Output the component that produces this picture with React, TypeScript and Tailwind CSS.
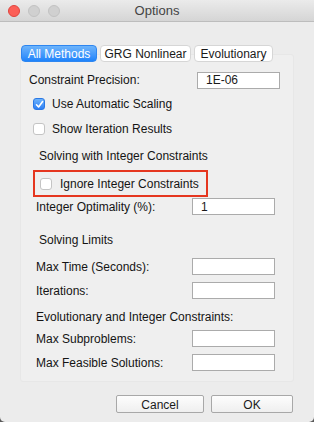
import React from "react";

const font = { fontFamily: '"Liberation Sans", Arial, sans-serif' };

const Field = ({ value = "", className = "" }: { value?: string; className?: string }) => (
  <div
    className={`h-[17px] bg-white border border-[#ababab] flex items-center pl-[8px] text-[12px] text-[#1a1a1a] ${className}`}
  >
    {value}
  </div>
);

const Check = ({ checked = false }: { checked?: boolean }) =>
  checked ? (
    <div className="w-[12px] h-[12px] rounded-[3px] bg-gradient-to-b from-[#6cb2fb] to-[#2d7ff5] border border-[#2a78e4] flex items-center justify-center">
      <svg width="9" height="9" viewBox="0 0 9 9">
        <path d="M1.5 4.8 L3.6 7 L7.6 1.6" fill="none" stroke="white" strokeWidth="1.6" strokeLinecap="round" strokeLinejoin="round" />
      </svg>
    </div>
  ) : (
    <div className="w-[12px] h-[12px] rounded-[3px] bg-white border border-[#c4c4c4]" />
  );

const LabelRow = ({ label, value, mt }: { label: string; value?: string; mt: string }) => (
  <div className={`${mt} h-[17px] flex items-center pl-[15px]`}>
    <span className="w-[156px]">{label}</span>
    <Field value={value} className="w-[83px]" />
  </div>
);

const Tab = ({ label, active = false, w }: { label: string; active?: boolean; w: string }) => (
  <div
    className={`${w} h-[17px] rounded-[4px] flex items-center justify-center text-[12px] ${
      active
        ? "bg-gradient-to-b from-[#6db4fb] to-[#1c83fb] text-white border border-[#2e86f0]"
        : "bg-white text-[#1a1a1a] border border-[#d6d6d6]"
    }`}
  >
    {label}
  </div>
);

export default function App() {
  return (
    <div className="w-[314px] h-[422px] bg-[#5a5a5a]" style={font}>
      <div className="w-[314px] h-[422px] bg-[#ececec] rounded-b-[5px] flex flex-col text-[12px] text-[#141414] overflow-hidden">
        {/* title bar */}
        <div className="h-[22px] shrink-0 bg-gradient-to-b from-[#ebebeb] to-[#d5d5d5] border-b border-[#bdbdbd] relative flex items-center justify-center">
          <div className="absolute left-[8px] top-[5px] flex gap-[8px]">
            <div className="w-[12px] h-[12px] rounded-full bg-[#fc5f57] border border-[#e0443e]" />
            <div className="w-[12px] h-[12px] rounded-full bg-[#d0d0d0] border border-[#c2c2c2]" />
            <div className="w-[12px] h-[12px] rounded-full bg-[#d0d0d0] border border-[#c2c2c2]" />
          </div>
          <span className="text-[13px] text-[#444444]">Options</span>
        </div>

        {/* tabs */}
        <div className="mt-[23px] ml-[21px] flex gap-[3px] relative z-10 -mb-[8px]">
          <Tab label="All Methods" active w="w-[76px]" />
          <Tab label="GRG Nonlinear" w="w-[91px]" />
          <Tab label="Evolutionary" w="w-[79px]" />
        </div>

        {/* panel */}
        <div className="mx-[20px] bg-[#efefef] border border-[#e7e7e7] rounded-[3px] flex flex-col pb-[10px]">
          <div className="mt-[15px] h-[20px] flex items-center pl-[8px]">
            <span className="w-[168px]">Constraint Precision:</span>
            <Field value="1E-06" className="w-[83px] h-[16px]" />
          </div>
          <div className="mt-[5px] h-[18px] flex items-center gap-[7px] pl-[12px]">
            <Check checked />
            <span>Use Automatic Scaling</span>
          </div>
          <div className="mt-[7px] h-[18px] flex items-center gap-[7px] pl-[12px]">
            <Check />
            <span>Show Iteration Results</span>
          </div>
          <div className="mt-[9px] h-[18px] flex items-center pl-[18px]">Solving with Integer Constraints</div>
          <div className="mt-[5px] ml-[12px] w-[175px] h-[27px] border-[2px] border-[#e5361f] flex items-center gap-[8px] pl-[5px]">
            <Check />
            <span>Ignore Integer Constraints</span>
          </div>
          <LabelRow label="Integer Optimality (%):" value="1" mt="mt-[1px]" />
          <div className="mt-[16px] h-[18px] flex items-center pl-[18px]">Solving Limits</div>
          <LabelRow label="Max Time (Seconds):" mt="mt-[9px]" />
          <LabelRow label="Iterations:" mt="mt-[7px]" />
          <div className="mt-[9px] h-[18px] flex items-center pl-[15px]">Evolutionary and Integer Constraints:</div>
          <LabelRow label="Max Subproblems:" mt="mt-[4px]" />
          <LabelRow label="Max Feasible Solutions:" mt="mt-[7px]" />
        </div>

        {/* buttons */}
        <div className="mt-[13px] flex gap-[7px] pl-[116px]">
          <button className="w-[88px] h-[18px] bg-gradient-to-b from-[#fdfdfd] to-[#efefef] border border-[#a8a8a8] rounded-[2px] text-[12px] text-[#1a1a1a]">
            Cancel
          </button>
          <button className="w-[82px] h-[18px] bg-gradient-to-b from-[#fdfdfd] to-[#efefef] border border-[#a8a8a8] rounded-[2px] text-[12px] text-[#1a1a1a]">
            OK
          </button>
        </div>
      </div>
    </div>
  );
}
